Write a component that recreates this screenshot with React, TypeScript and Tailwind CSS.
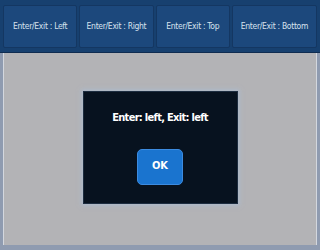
import React from "react";

const tabs = ["Enter/Exit : Left", "Enter/Exit : Right", "Enter/Exit : Top", "Enter/Exit : Bottom"];

export default function App() {
  return (
    <div
      className="w-[320px] h-[250px] flex flex-col bg-[#8f9bb0] overflow-hidden"
      style={{ fontFamily: '"DejaVu Sans Condensed", "Roboto", sans-serif' }}
    >
      <div className="h-[53px] bg-[#17406f] flex px-[3px] pt-[5px] pb-[4px] gap-[2px] border-b border-[#0f2c50]">
        {tabs.map((t, i) => (
          <div
            key={t}
            className={`${i === 3 ? "flex-[1.15]" : "flex-1"} bg-[#1c487c] border border-[#143762] rounded-[2px] flex items-center justify-center text-[#d7e2ee] text-[8.5px] tracking-[-0.3px]`}
          >
            {t}
          </div>
        ))}
      </div>
      <div className="flex-1 flex px-[3px] pb-[5px]">
        <div className="flex-1 bg-[#b3b3b6] border-x border-[#d3d7de] flex justify-center pt-[38px]">
          <div className="w-[155px] h-[113px] bg-[#07121f] border border-[#1d2d40] shadow-[0_0_4px_2px_rgba(170,190,215,0.6)] flex flex-col items-center">
            <div className="mt-[18px] text-white font-bold text-[11px] tracking-[-0.7px]">Enter: left, Exit: left</div>
            <div className="mt-[22px] w-[46px] h-[36px] rounded-[5px] bg-[#1a74cf] border border-[#3c8be0] flex items-center justify-center text-white font-bold text-[11px]">
              OK
            </div>
          </div>
        </div>
      </div>
    </div>
  );
}
